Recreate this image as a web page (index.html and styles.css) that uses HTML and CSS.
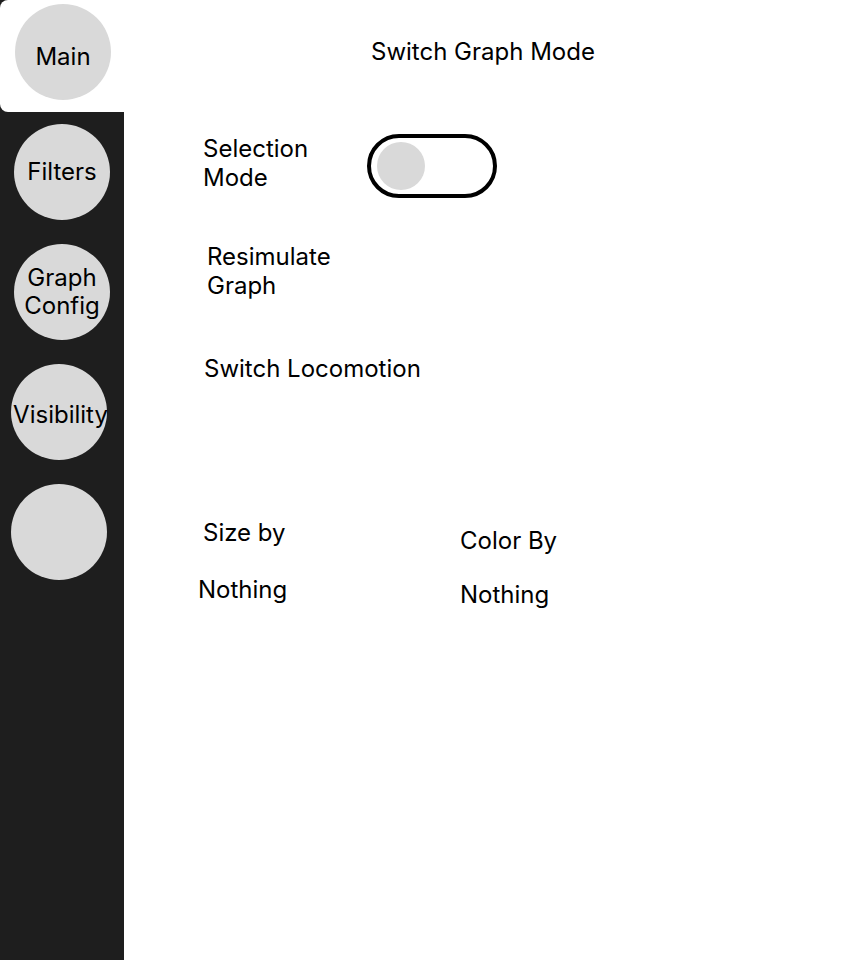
FILE: index.html
```html
<!DOCTYPE html>
<html lang="en">
<head>
<meta charset="utf-8">
<title>Graph Controls</title>
<link rel="stylesheet" href="styles.css">
</head>
<body>
<div class="app">
  <nav class="sidebar">
    <div class="tab">
      <div class="circle shift-main">Main</div>
    </div>
    <div class="circle item-a first">Filters</div>
    <div class="circle item-a">Graph<br>Config</div>
    <div class="circle item-b shift-vis">Visibility</div>
    <div class="circle item-b"></div>
  </nav>
  <main class="content">
    <div class="title">Switch Graph Mode</div>
    <div class="row-select">
      <div class="label select-label">Selection<br>Mode</div>
      <div class="toggle"><div class="knob"></div></div>
    </div>
    <div class="label resim">Resimulate<br>Graph</div>
    <div class="label loco">Switch Locomotion</div>
    <div class="row-by">
      <div class="col-size">
        <div class="label size-by">Size by</div>
        <div class="label size-val">Nothing</div>
      </div>
      <div class="col-color">
        <div class="label">Color By</div>
        <div class="label color-val">Nothing</div>
      </div>
    </div>
  </main>
</div>
</body>
</html>
```

FILE: styles.css
```css
html, body {
  margin: 0;
  padding: 0;
  background: #ffffff;
}

body {
  font-family: "Inter", "Liberation Sans", sans-serif;
  font-size: 24px;
  color: #000000;
}

.app {
  display: flex;
  width: 860px;
  height: 960px;
}

.sidebar {
  width: 124px;
  flex: none;
  background: #1e1e1e;
  display: flex;
  flex-direction: column;
}

.tab {
  height: 112px;
  box-sizing: border-box;
  background: #ffffff;
  border-radius: 8px 0 0 8px;
  padding: 4px 0 0 15px;
}

.circle {
  width: 96px;
  height: 96px;
  border-radius: 50%;
  background: #d9d9d9;
  display: flex;
  align-items: center;
  justify-content: center;
  text-align: center;
  line-height: 28px;
  box-sizing: border-box;
  white-space: nowrap;
}

.shift-main { padding-top: 10px; }
.shift-vis { padding: 6px 0 0 3px; }

.item-a { margin: 24px 0 0 14px; }
.item-b { margin: 24px 0 0 11px; }
.first { margin-top: 12px; }

.content {
  flex: 1;
  display: flex;
  flex-direction: column;
  align-items: flex-start;
  padding-left: 1px;
}

.label {
  line-height: 29px;
}

.title {
  line-height: 29px;
  margin: 37px 0 0 246px;
}

.row-select {
  display: flex;
  align-items: flex-start;
  margin: 68px 0 0 78px;
}

.select-label {
  width: 164px;
}

.toggle {
  width: 130px;
  height: 64px;
  box-sizing: border-box;
  border: 4px solid #000000;
  border-radius: 32px;
  padding: 0 6px;
  display: flex;
  align-items: center;
}

.knob {
  width: 48px;
  height: 48px;
  border-radius: 50%;
  background: #d9d9d9;
}

.resim {
  margin: 44px 0 0 82px;
}

.loco {
  margin: 54px 0 0 79px;
}

.row-by {
  display: flex;
  align-items: flex-start;
  margin: 135px 0 0 0;
}

.col-size {
  width: 335px;
  display: flex;
  flex-direction: column;
}

.size-by {
  margin-left: 78px;
}

.size-val {
  margin: 28px 0 0 73px;
}

.col-color {
  margin-top: 8px;
  display: flex;
  flex-direction: column;
}

.color-val {
  margin-top: 25px;
}
```
